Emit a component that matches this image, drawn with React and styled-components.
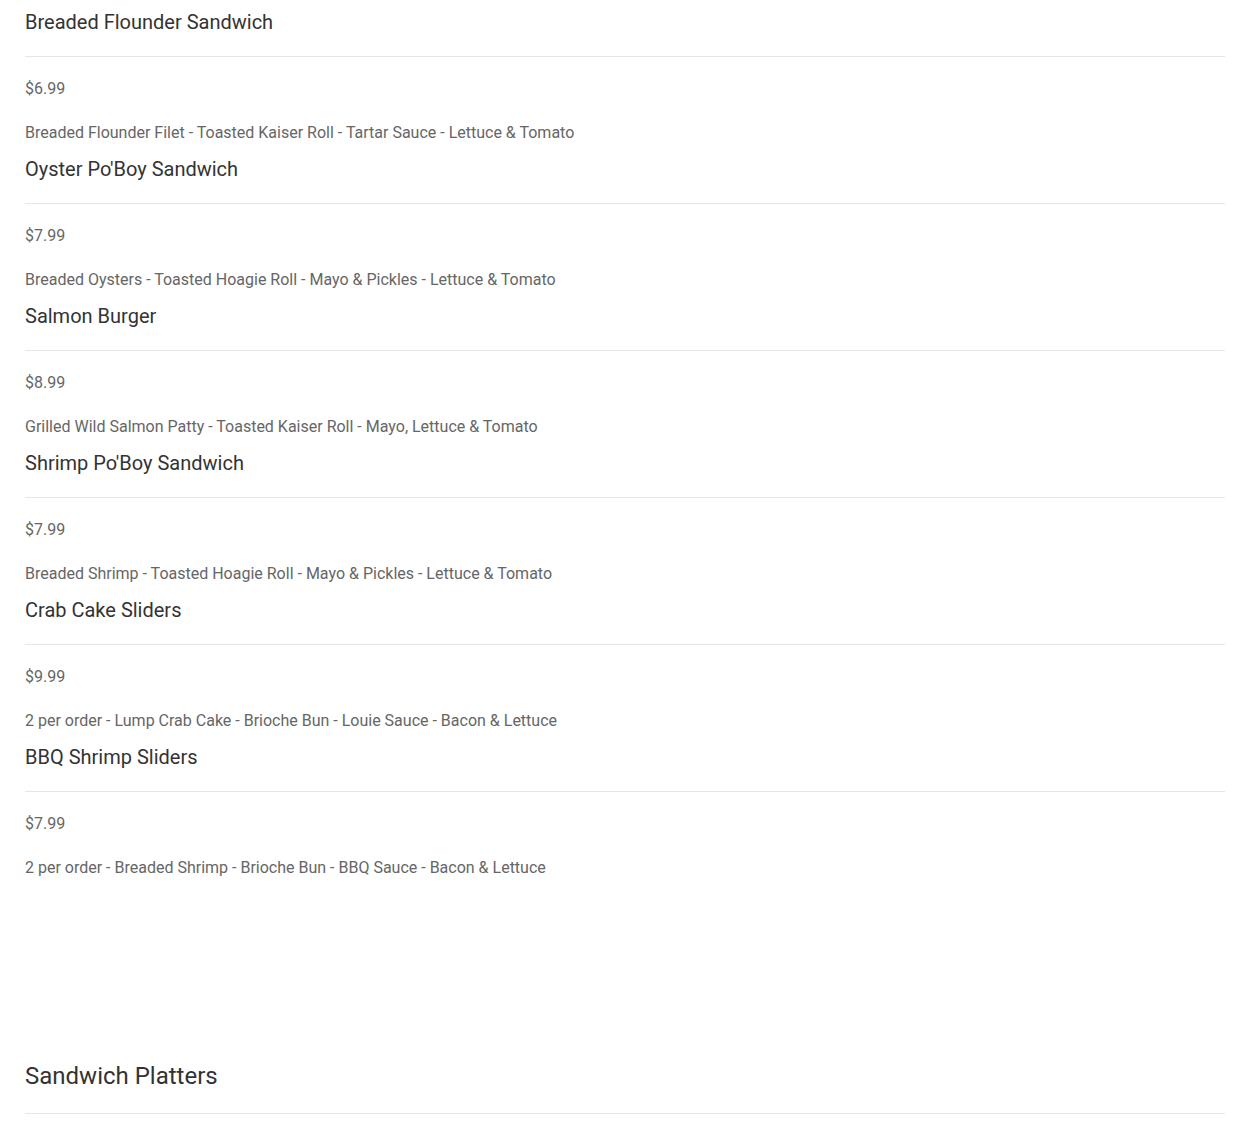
import React from "react";
import styled, { createGlobalStyle } from "styled-components";

const Global = createGlobalStyle`
  html, body { margin: 0; padding: 0; background: #fff; }
  body { font-family: Roboto, "Noto Sans", Arial, sans-serif; }
`;

const Page = styled.div`
  padding: 10px 25px 0;
`;

const Item = styled.article`
  display: flex;
  flex-direction: column;
`;

const Title = styled.h3`
  margin: 0;
  font-size: 20px;
  line-height: 24px;
  font-weight: 400;
  color: #333;
  padding-bottom: 22px;
  border-bottom: 1px solid #e6e6e6;
`;

const Price = styled.p`
  margin: 20px 0 0;
  font-size: 16px;
  line-height: 24px;
  color: #666;
`;

const Desc = styled.p`
  margin: 20px 0 12px;
  font-size: 16px;
  line-height: 24px;
  color: #666;
`;

const Section = styled.section`
  margin-top: 169px;
`;

const SectionTitle = styled.h2`
  margin: 0;
  font-size: 24px;
  line-height: 30px;
  font-weight: 400;
  color: #333;
  padding-bottom: 22px;
  border-bottom: 1px solid #e6e6e6;
`;

const items = [
  ["Breaded Flounder Sandwich", "$6.99", "Breaded Flounder Filet - Toasted Kaiser Roll - Tartar Sauce - Lettuce & Tomato"],
  ["Oyster Po'Boy Sandwich", "$7.99", "Breaded Oysters - Toasted Hoagie Roll - Mayo & Pickles - Lettuce & Tomato"],
  ["Salmon Burger", "$8.99", "Grilled Wild Salmon Patty - Toasted Kaiser Roll - Mayo, Lettuce & Tomato"],
  ["Shrimp Po'Boy Sandwich", "$7.99", "Breaded Shrimp - Toasted Hoagie Roll - Mayo & Pickles - Lettuce & Tomato"],
  ["Crab Cake Sliders", "$9.99", "2 per order - Lump Crab Cake - Brioche Bun - Louie Sauce - Bacon & Lettuce"],
  ["BBQ Shrimp Sliders", "$7.99", "2 per order - Breaded Shrimp - Brioche Bun - BBQ Sauce - Bacon & Lettuce"],
];

export default function App() {
  return (
    <Page>
      <Global />
      {items.map(([t, p, d]) => (
        <Item key={t}>
          <Title>{t}</Title>
          <Price>{p}</Price>
          <Desc>{d}</Desc>
        </Item>
      ))}
      <Section>
        <SectionTitle>Sandwich Platters</SectionTitle>
      </Section>
    </Page>
  );
}
